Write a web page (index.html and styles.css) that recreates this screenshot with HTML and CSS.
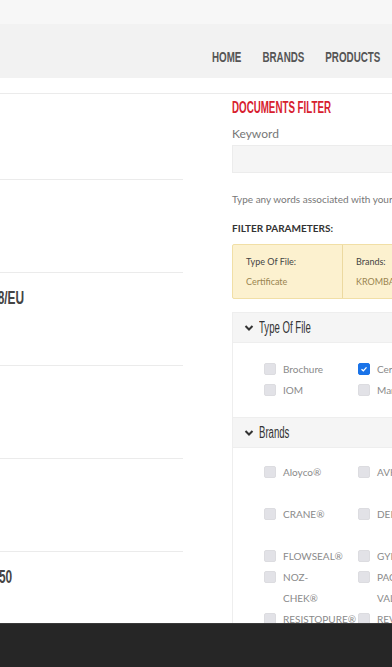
FILE: index.html
```html
<!DOCTYPE html>
<html lang="en">
<head>
    <meta charset="UTF-8">
    <meta name="viewport" content="width=device-width, initial-scale=1.0">
    <title>Documents</title>
    <link rel="stylesheet" href="styles.css">
</head>
<body>

    <div class="topbar"></div>
    <header class="site-header">
        <nav class="main-nav">
            <a href="#">HOME</a>
            <a href="#">BRANDS</a>
            <a href="#">PRODUCTS</a>
            <a href="#">SERVICES</a>
            <a href="#">CONTACT</a>
        </nav>
    </header>
    <div class="subbar"></div>

    <main class="content">
        <section class="doc-list">
            <div class="doc-row"><div class="doc-title">Installation Manual</div></div>
            <div class="doc-row"><div class="doc-title">Product Catalogue</div></div>
            <div class="doc-row"><div class="doc-title">DECLARATION OF CONFORMITY PED 2014/68/EU</div></div>
            <div class="doc-row"><div class="doc-title">Certificate</div></div>
            <div class="doc-row"><div class="doc-title">Brochure</div></div>
            <div class="doc-row"><div class="doc-title">CERTIFICATE ISO 9001 API 6D ANSI CLASS 150</div></div>
        </section>

        <aside class="filter">
            <h2 class="filter-title">DOCUMENTS FILTER</h2>
            <label class="field-label">Keyword</label>
            <input class="field-input" type="text">
            <p class="field-help">Type any words associated with your document to narrow the list</p>

            <div class="params-title">FILTER PARAMETERS:</div>
            <div class="params">
                <div class="param">
                    <div class="param-name">Type Of File:</div>
                    <div class="param-value">Certificate</div>
                </div>
                <div class="param">
                    <div class="param-name">Brands:</div>
                    <div class="param-value">KROMBACH®</div>
                </div>
            </div>

            <div class="acc">
                <div class="acc-head">
                    <svg class="chev" viewBox="0 0 10 10"><path d="M1.5 3 L5 6.5 L8.5 3" fill="none" stroke="#333" stroke-width="2"/></svg>
                    <span class="acc-title">Type Of File</span>
                </div>
                <div class="acc-body">
                    <label class="opt"><span class="box"></span><span class="opt-text">Brochure</span></label>
                    <label class="opt"><span class="box checked"><svg viewBox="0 0 12 12"><path d="M3 6.2 L5.2 8.2 L9 4" fill="none" stroke="#fff" stroke-width="1.6"/></svg></span><span class="opt-text">Certificate</span></label>
                    <label class="opt"><span class="box"></span><span class="opt-text">Datasheet</span></label>
                    <label class="opt"><span class="box"></span><span class="opt-text">IOM</span></label>
                    <label class="opt"><span class="box"></span><span class="opt-text">Manual</span></label>
                    <label class="opt"><span class="box"></span><span class="opt-text">Drawing</span></label>
                </div>

                <div class="acc-head">
                    <svg class="chev" viewBox="0 0 10 10"><path d="M1.5 3 L5 6.5 L8.5 3" fill="none" stroke="#333" stroke-width="2"/></svg>
                    <span class="acc-title">Brands</span>
                </div>
                <div class="acc-body brands">
                    <label class="opt"><span class="box"></span><span class="opt-text">Aloyco®</span></label>
                    <label class="opt"><span class="box"></span><span class="opt-text">AVK®</span></label>
                    <label class="opt"><span class="box"></span><span class="opt-text">BIFFI® Actuators</span></label>
                    <label class="opt"><span class="box"></span><span class="opt-text">CRANE®</span></label>
                    <label class="opt"><span class="box"></span><span class="opt-text">DEPA®</span></label>
                    <label class="opt"><span class="box"></span><span class="opt-text">DUO-CHEK®</span></label>
                    <label class="opt"><span class="box"></span><span class="opt-text">FLOWSEAL®</span></label>
                    <label class="opt"><span class="box"></span><span class="opt-text">GYPSY®</span></label>
                    <label class="opt"><span class="box"></span><span class="opt-text">KROMBACH®</span></label>
                    <label class="opt"><span class="box"></span><span class="opt-text">NOZ-CHEK®</span></label>
                    <label class="opt"><span class="box"></span><span class="opt-text">PACIFIC VALVES®</span></label>
                    <label class="opt"><span class="box"></span><span class="opt-text">REDWHITE®</span></label>
                    <label class="opt"><span class="box"></span><span class="opt-text">RESISTOPURE®</span></label>
                    <label class="opt"><span class="box"></span><span class="opt-text">REVO®</span></label>
                    <label class="opt"><span class="box"></span><span class="opt-text">SAUNDERS®</span></label>
                </div>
            </div>
        </aside>
    </main>

    <footer class="bottom-bar"></footer>

</body>
</html>
```

FILE: styles.css
```css
body {
    margin: 0;
    font-family: Lato, "Open Sans", sans-serif;
    background: #fff;
    color: #333;
    overflow-x: hidden;
}
.topbar {
    height: 24px;
    background: #f7f7f7;
}
.site-header {
    height: 54px;
    background: #f2f2f2;
    display: flex;
    align-items: flex-end;
}
/* headings are a narrow display face: squeeze Arial-metric text to match */
.main-nav {
    display: flex;
    gap: 30px;
    margin-left: 212px;
    padding-bottom: 13px;
    white-space: nowrap;
    transform: scaleX(0.7);
    transform-origin: 0 50%;
}
.main-nav a {
    font-family: "Liberation Sans", Arial, sans-serif;
    font-weight: bold;
    font-size: 14px;
    line-height: 16px;
    color: #555;
    text-decoration: none;
}
.subbar {
    height: 15px;
    border-bottom: 1px solid #ebebeb;
}
.content {
    display: flex;
    align-items: flex-start;
}
.doc-list {
    flex: none;
    width: 461px;
    margin-left: -278px;
}
.doc-row {
    box-sizing: border-box;
    height: 93px;
    border-bottom: 1px solid #ebebeb;
    padding: 13px 20px;
}
.doc-row:first-child {
    height: 86px;
}
.doc-title {
    font-family: "Liberation Sans", Arial, sans-serif;
    font-weight: bold;
    font-size: 18px;
    line-height: 24px;
    color: #444;
    white-space: nowrap;
    transform: scaleX(0.66);
    transform-origin: 0 50%;
}
.filter {
    flex: none;
    width: 300px;
    margin-left: 49px;
    padding-top: 4px;
}
.filter-title {
    margin: 0;
    font-family: "Liberation Sans", Arial, sans-serif;
    font-weight: bold;
    font-size: 16px;
    line-height: 20px;
    color: #d7202e;
    white-space: nowrap;
    transform: scaleX(0.61);
    transform-origin: 0 50%;
}
.field-label {
    display: block;
    margin-top: 8px;
    font-size: 12px;
    line-height: 16px;
    color: #777;
}
.field-input {
    display: block;
    box-sizing: border-box;
    width: 100%;
    height: 28px;
    margin-top: 3px;
    background: #f5f5f5;
    border: 1px solid #ececec;
}
.field-help {
    margin: 19px 0 0;
    font-size: 10px;
    line-height: 14px;
    color: #777;
    white-space: nowrap;
}
.params-title {
    margin-top: 15px;
    font-size: 10px;
    font-weight: bold;
    line-height: 14px;
    color: #333;
}
.params {
    display: flex;
    margin-top: 9px;
    background: #fcf1cf;
    border: 1px solid #f1dfa6;
    border-radius: 2px;
}
.param {
    width: 96px;
    padding: 10px 0 9px 13px;
    border-right: 1px solid #ecd9a0;
}
.param-name {
    font-size: 9px;
    line-height: 14px;
    color: #444;
}
.param-value {
    margin-top: 6px;
    font-size: 9px;
    line-height: 14px;
    color: #9a8550;
    white-space: nowrap;
}
.acc {
    margin-top: 13px;
}
.acc-head {
    box-sizing: border-box;
    display: flex;
    align-items: center;
    gap: 5px;
    height: 31px;
    padding-left: 11px;
    background: #f5f5f5;
    border: 1px solid #eeeeee;
}
.acc-title {
    display: inline-block;
    font-family: "Liberation Sans", Arial, sans-serif;
    font-size: 16px;
    color: #333;
    white-space: nowrap;
    transform: scaleX(0.6);
    transform-origin: 0 50%;
}
.chev {
    width: 10px;
    height: 10px;
}
.acc-body {
    display: grid;
    grid-template-columns: repeat(3, 94px);
    padding: 16px 0 16px 31px;
    border-left: 1px solid #eeeeee;
}
.acc-body.brands {
    padding-top: 14px;
}
.opt {
    display: flex;
    align-items: flex-start;
    gap: 7px;
    font-size: 10px;
    line-height: 21px;
    color: #8a8a8a;
}
.opt-text {
    width: 58px;
}
.box {
    flex: none;
    box-sizing: border-box;
    width: 12px;
    height: 12px;
    margin-top: 4px;
    border-radius: 2px;
    background: #e2e2e7;
    border: 1px solid #dcdce0;
}
.box.checked {
    background: #1a73e8;
    border-color: #1a73e8;
}
.box svg {
    display: block;
    width: 10px;
    height: 10px;
}
.bottom-bar {
    position: fixed;
    left: 0;
    right: 0;
    bottom: 0;
    height: 43px;
    background: #262626;
    border-top: 1px solid #3a3a3a;
}
```
